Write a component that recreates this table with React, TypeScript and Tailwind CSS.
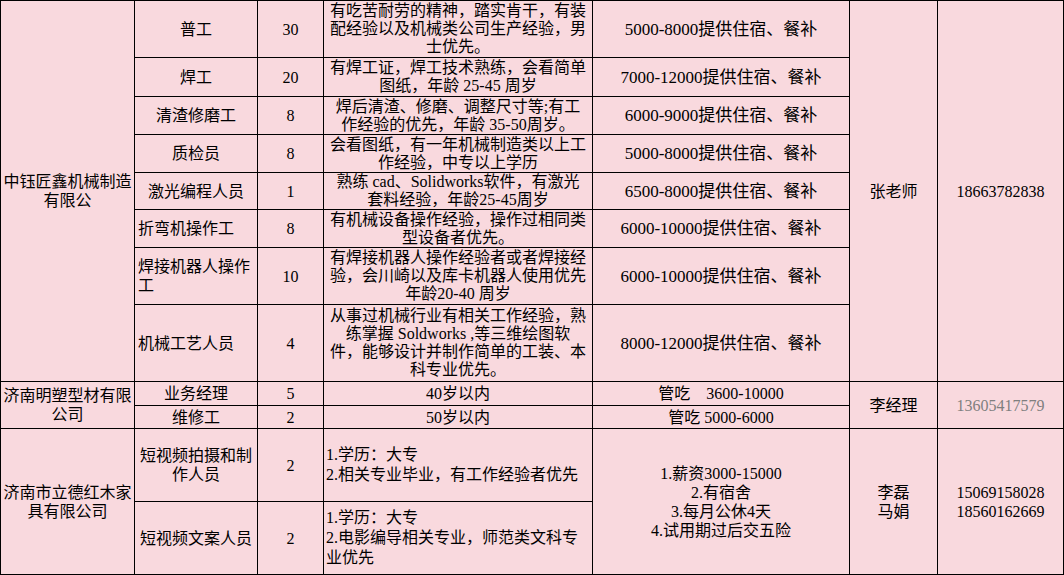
import React from "react";

type CellProps = {
  children?: React.ReactNode;
  className?: string;
  align?: "center" | "left";
};

function Cell({ children, className = "", align = "center" }: CellProps) {
  return (
    <div
      className={
        "bg-[#f9d9de] flex items-center overflow-hidden " +
        (align === "center" ? "justify-center text-center " : "justify-start text-left ") +
        className
      }
    >
      <div>{children}</div>
    </div>
  );
}

const lines = (arr: string[]) =>
  arr.map((l, i) => (
    <React.Fragment key={i}>
      {l}
      {i < arr.length - 1 && <br />}
    </React.Fragment>
  ));

type Row = {
  title: string[];
  titleLeft?: boolean;
  num: string;
  desc: string[];
  salary: string;
};

const rows1: Row[] = [
  {
    title: ["普工"],
    num: "30",
    desc: ["有吃苦耐劳的精神，踏实肯干，有装", "配经验以及机械类公司生产经验，男", "士优先。"],
    salary: "5000-8000提供住宿、餐补",
  },
  {
    title: ["焊工"],
    num: "20",
    desc: ["有焊工证，焊工技术熟练，会看简单", "图纸，年龄 25-45 周岁"],
    salary: "7000-12000提供住宿、餐补",
  },
  {
    title: ["清渣修磨工"],
    num: "8",
    desc: ["焊后清渣、修磨、调整尺寸等;有工", "作经验的优先，年龄 35-50周岁。"],
    salary: "6000-9000提供住宿、餐补",
  },
  {
    title: ["质检员"],
    num: "8",
    desc: ["会看图纸，有一年机械制造类以上工", "作经验，中专以上学历"],
    salary: "5000-8000提供住宿、餐补",
  },
  {
    title: ["激光编程人员"],
    num: "1",
    desc: ["熟练 cad、Solidworks软件，有激光", "套料经验，年龄25-45周岁"],
    salary: "6500-8000提供住宿、餐补",
  },
  {
    title: ["折弯机操作工"],
    titleLeft: true,
    num: "8",
    desc: ["有机械设备操作经验，操作过相同类", "型设备者优先。"],
    salary: "6000-10000提供住宿、餐补",
  },
  {
    title: ["焊接机器人操作", "工"],
    titleLeft: true,
    num: "10",
    desc: ["有焊接机器人操作经验者或者焊接经", "验，会川崎以及库卡机器人使用优先", "年龄20-40 周岁"],
    salary: "6000-10000提供住宿、餐补",
  },
  {
    title: ["机械工艺人员"],
    titleLeft: true,
    num: "4",
    desc: [
      "从事过机械行业有相关工作经验，熟",
      "练掌握 Soldworks ,等三维绘图软",
      "件，能够设计并制作简单的工装、本",
      "科专业优先。",
    ],
    salary: "8000-12000提供住宿、餐补",
  },
];

export default function App() {
  return (
    <div className="w-[1064px] h-[575px] bg-[#f9d9de] font-['Liberation_Serif','Noto_Sans_CJK_SC',serif] text-[16px] leading-[19px] text-black">
      <div className="grid grid-cols-[133px_122px_65px_268px_256px_87px_125px] grid-rows-[56px_38px_37px_37px_36px_37px_56px_76px_23px_22px_72px_72px] gap-px p-px bg-black w-[1064px] h-[575px]">
        {rows1.map((r, i) => (
          <React.Fragment key={i}>
            {i === 0 && (
              <Cell className="row-span-8">{lines(["中钰匠鑫机械制造", "有限公"])}</Cell>
            )}
            <Cell align={r.titleLeft ? "left" : "center"} className={r.titleLeft ? "pl-[3px]" : ""}>
              {lines(r.title)}
            </Cell>
            <Cell>{r.num}</Cell>
            <Cell className="leading-[18px]">{lines(r.desc)}</Cell>
            <Cell className="text-[17px]">{r.salary}</Cell>
            {i === 0 && <Cell className="row-span-8">张老师</Cell>}
            {i === 0 && <Cell className="row-span-8">18663782838</Cell>}
          </React.Fragment>
        ))}

        <Cell className="row-span-2">{lines(["济南明塑型材有限", "公司"])}</Cell>
        <Cell>业务经理</Cell>
        <Cell>5</Cell>
        <Cell>40岁以内</Cell>
        <Cell>管吃　3600-10000</Cell>
        <Cell className="row-span-2">李经理</Cell>
        <Cell className="row-span-2 text-[#7f7f7f]">13605417579</Cell>

        <Cell>维修工</Cell>
        <Cell>2</Cell>
        <Cell>50岁以内</Cell>
        <Cell>管吃 5000-6000</Cell>

        <Cell className="row-span-2">{lines(["济南市立德红木家", "具有限公司"])}</Cell>
        <Cell>{lines(["短视频拍摄和制", "作人员"])}</Cell>
        <Cell>2</Cell>
        <Cell align="left" className="pl-[2px] leading-[20px]">
          {lines(["1.学历：大专", "2.相关专业毕业，有工作经验者优先"])}
        </Cell>
        <Cell className="row-span-2">
          {lines(["1.薪资3000-15000", "2.有宿舍", "3.每月公休4天", "4.试用期过后交五险"])}
        </Cell>
        <Cell className="row-span-2">{lines(["李磊", "马娟"])}</Cell>
        <Cell className="row-span-2">{lines(["15069158028", "18560162669"])}</Cell>

        <Cell>短视频文案人员</Cell>
        <Cell>2</Cell>
        <Cell align="left" className="pl-[2px] leading-[20px]">
          {lines(["1.学历：大专", "2.电影编导相关专业，师范类文科专", "业优先"])}
        </Cell>
      </div>
    </div>
  );
}
